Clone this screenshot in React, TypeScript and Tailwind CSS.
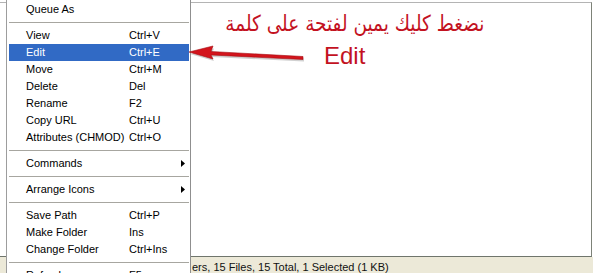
import React from 'react';

type Item =
  | { kind: 'item'; label: string; keys?: string; sub?: boolean; active?: boolean }
  | { kind: 'sep' };

const items: Item[] = [
  { kind: 'item', label: 'Queue As' },
  { kind: 'sep' },
  { kind: 'item', label: 'View', keys: 'Ctrl+V' },
  { kind: 'item', label: 'Edit', keys: 'Ctrl+E', active: true },
  { kind: 'item', label: 'Move', keys: 'Ctrl+M' },
  { kind: 'item', label: 'Delete', keys: 'Del' },
  { kind: 'item', label: 'Rename', keys: 'F2' },
  { kind: 'item', label: 'Copy URL', keys: 'Ctrl+U' },
  { kind: 'item', label: 'Attributes (CHMOD)', keys: 'Ctrl+O' },
  { kind: 'sep' },
  { kind: 'item', label: 'Commands', sub: true },
  { kind: 'sep' },
  { kind: 'item', label: 'Arrange Icons', sub: true },
  { kind: 'sep' },
  { kind: 'item', label: 'Save Path', keys: 'Ctrl+P' },
  { kind: 'item', label: 'Make Folder', keys: 'Ins' },
  { kind: 'item', label: 'Change Folder', keys: 'Ctrl+Ins' },
  { kind: 'sep' },
  { kind: 'item', label: 'Refresh', keys: 'F5' },
];

function MenuRow({ item }: { item: Item }) {
  if (item.kind === 'sep') {
    return (
      <div className="h-[9px] pt-[4px]">
        <div className="h-px bg-[#a7a6a0]" />
      </div>
    );
  }
  return (
    <div
      className={
        item.active
          ? 'flex h-[17px] items-center bg-[#316ac5] text-white'
          : 'flex h-[17px] items-center text-black'
      }
    >
      <span className="w-[120px] shrink-0 pl-[17px] whitespace-nowrap">{item.label}</span>
      {item.keys && <span className="whitespace-nowrap">{item.keys}</span>}
      {item.sub && (
        <svg className="ml-auto mr-[4px]" width="4" height="7" viewBox="0 0 4 7">
          <path d="M0 0 L4 3.5 L0 7 Z" fill="#000" />
        </svg>
      )}
    </div>
  );
}

export default function App() {
  return (
    <div className="relative h-[273px] w-[593px] overflow-hidden bg-white font-['Liberation_Sans',Arial,sans-serif] text-[11px]">
      {/* file list window behind the menu */}
      <div className="flex h-full flex-col">
        <div className="mt-[2px] h-[255px] w-[592px] shrink-0 border-t border-r border-b border-t-[#b4b4b4] border-r-[#7d8278] border-b-[#6f756c] bg-white" />
        <div className="flex-1 bg-[#ece9d8] pl-[192px] pt-[3px] leading-[14px] text-[#111]">
          ers, 15 Files, 15 Total, 1 Selected (1 KB)
        </div>
      </div>

      {/* context menu */}
      <div className="absolute top-0 left-[6px] w-[185px] border-x border-l-[#9d9d9d] border-r-[#8f8f8f] bg-white pt-px pr-[1px] pl-[2px]">
        {items.map((it, i) => (
          <MenuRow key={i} item={it} />
        ))}
      </div>

      {/* annotation */}
      <div
        dir="rtl"
        className="absolute top-[13px] right-[109px] origin-right scale-x-[0.84] font-['DejaVu_Sans',sans-serif] text-[22px] leading-none whitespace-nowrap text-[#c3121f]"
      >
        نضغط كليك يمين لفتحة على كلمة
      </div>
      <div className="absolute top-[44px] left-[324px] text-[24px] leading-none text-[#c3121f]">
        Edit
      </div>
      <svg className="absolute top-[44px] left-[186px]" width="124" height="20" viewBox="0 0 124 20">
        <path d="M4 10 L28 4.5 L26 9.5 L118 14.5 L118 17.5 L26 13 L28 17 Z" fill="#9a9a9a" opacity="0.45" />
        <path d="M3 8 L27 2 L25 7.5 L117 12.5 L117 15.5 L25 11 L27 15 Z" fill="#d3141c" stroke="#a50d12" strokeWidth="0.6" />
      </svg>
    </div>
  );
}
